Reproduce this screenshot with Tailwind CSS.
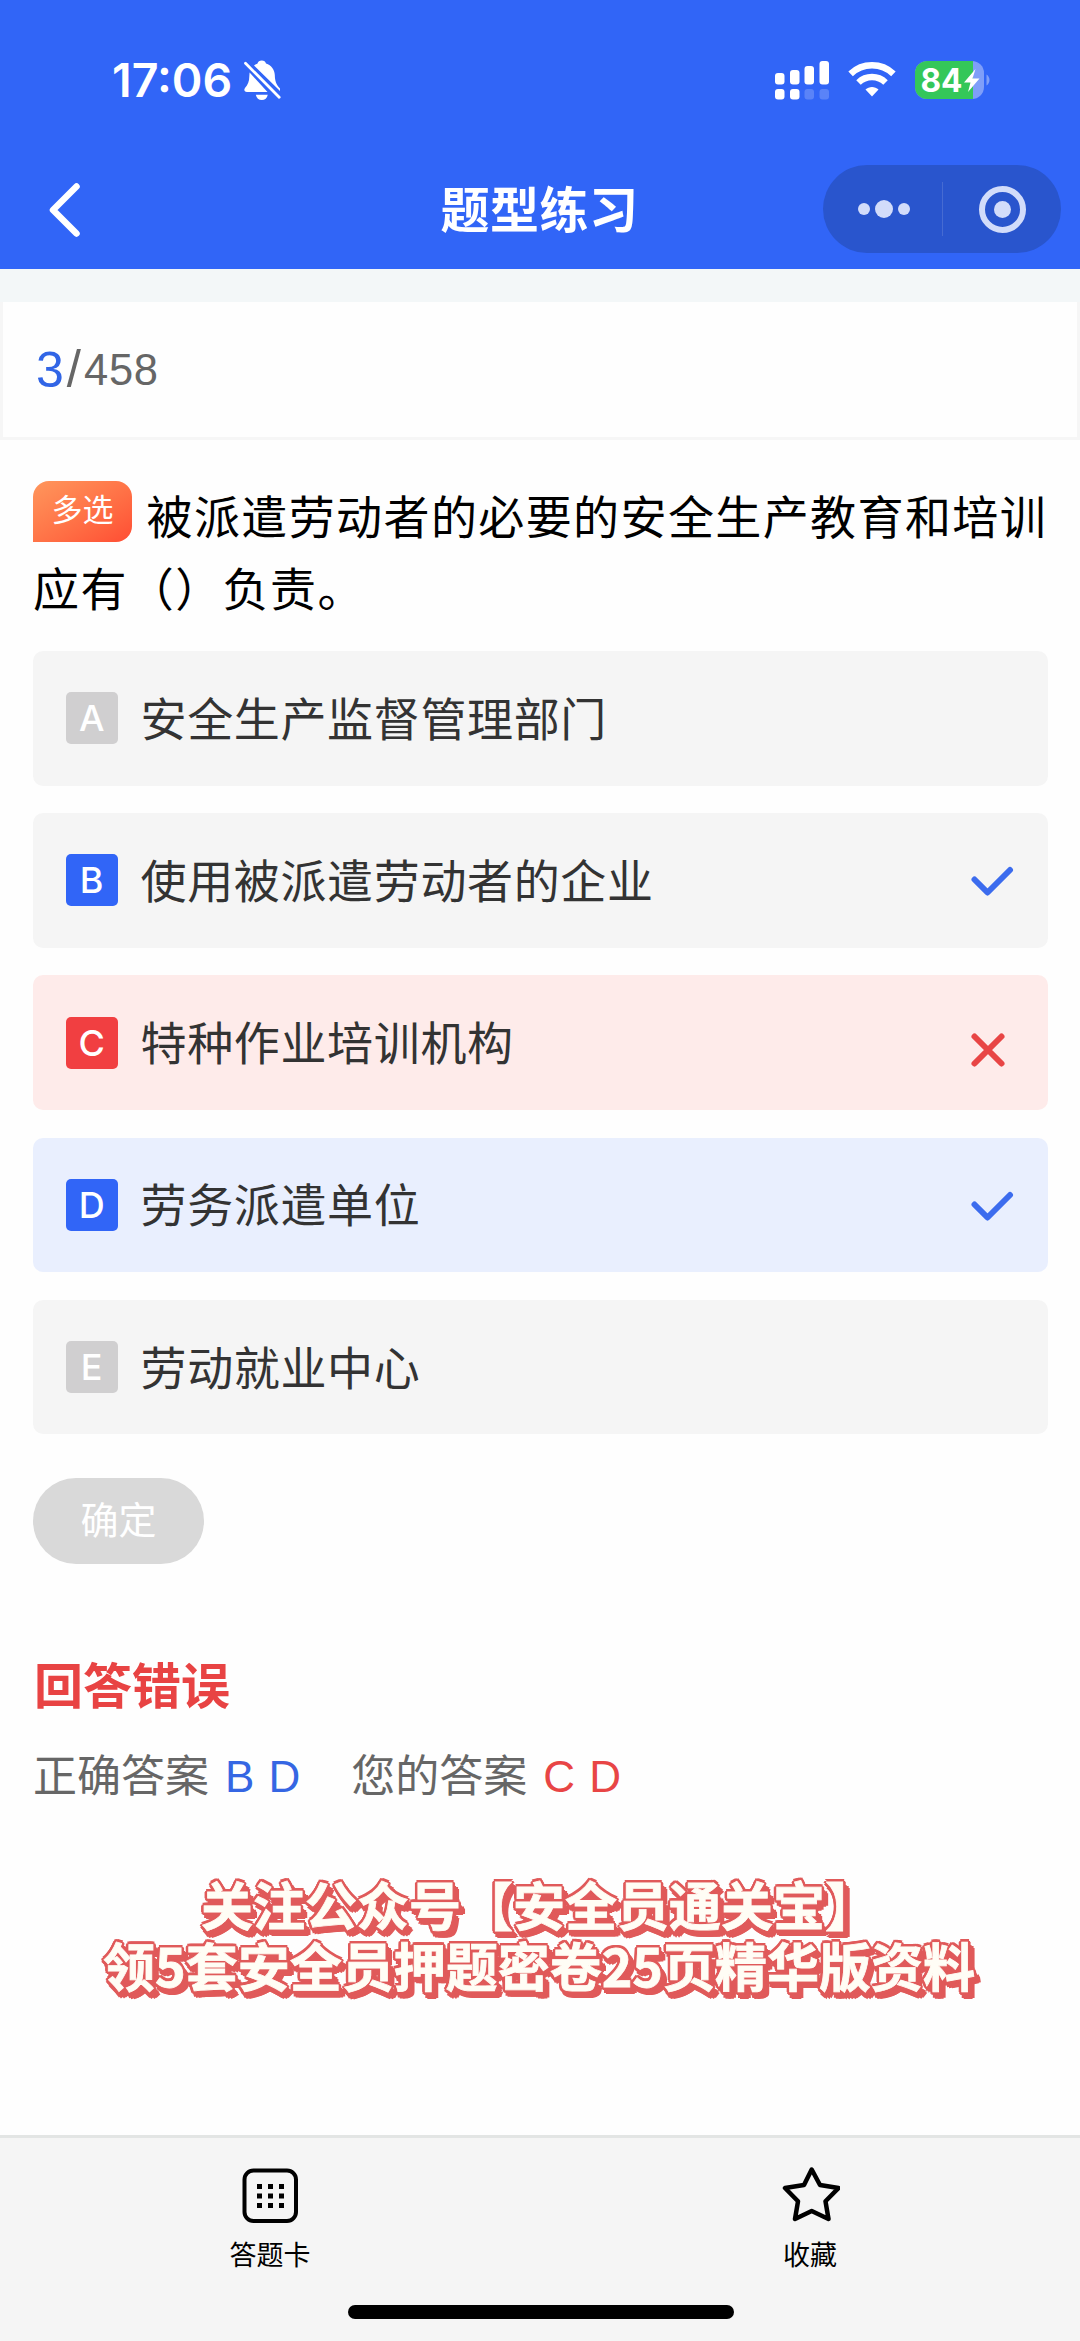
<!DOCTYPE html>
<html lang="zh-CN">
<head>
<meta charset="utf-8">
<title>题型练习</title>
<script src="https://cdn.jsdelivr.net/npm/@tailwindcss/browser@4"></script>
</head>
<body class="bg-[#fefefe]">
<div class="flex h-[2341px] w-[1080px] flex-col overflow-hidden font-['Liberation_Sans','Noto_Sans_CJK_SC',sans-serif] text-[#333]">

  <header class="h-[269px] shrink-0 bg-[#3165f7] text-white">
    <div class="flex h-[160px] items-center pr-[89px] pl-[112px]">
      <span class="w-[121px] pt-px font-['Inter',sans-serif] text-[46.500px] leading-none font-semibold">17:06</span>
      <svg class="ml-[10px] h-[40px] w-[40px]" viewBox="0 0 40 40" fill="#fff">
        <path d="M11 5.500C12.500 4.500 13.500 4 14.500 3.500C15 1.500 16.500 .5 18.800 .5C21 .5 22.500 1.500 23 3.500C28.500 5.500 31.500 9.500 31.800 15C32 21 33 24.500 37 28.500V31L11 5.500Z"/>
        <path d="M6.600 12.500L24.500 32H4C1 32 .8 29.500 2 28C5 24.500 6.200 21.500 6.300 16.500Z"/>
        <path d="M12.800 34.700H24.800C24 38 22 40 18.800 40S13.600 38 12.800 34.700Z"/>
        <path d="M2.500 3.300L36.200 37.200" stroke="#fff" stroke-width="2.800" stroke-linecap="round"/>
      </svg>
      <div class="ml-auto flex items-center">
        <svg class="h-[40px] w-[56px]" viewBox="0 0 56 40" fill="#fff">
          <rect x="1" y="13" width="9.500" height="11.500" rx="3"/><rect x="16" y="10" width="9.500" height="14.500" rx="3"/><rect x="30.500" y="6" width="9.500" height="18.500" rx="3"/><rect x="45.500" y="1" width="9.500" height="23.500" rx="3"/>
          <rect x="1" y="29" width="9.500" height="10.500" rx="3"/><rect x="16" y="29" width="9.500" height="10.500" rx="3"/><rect x="30.500" y="29" width="9.500" height="10.500" rx="3" opacity=".2"/><rect x="45.500" y="29" width="9.500" height="10.500" rx="3" opacity=".2"/>
        </svg>
        <svg class="ml-[18px] h-[40px] w-[48px]" viewBox="0 0 48 40" fill="none" stroke="#fff" stroke-width="6.500">
          <path d="M2.600 13.800A31 31 0 0 1 45.400 13.800"/><path d="M10.500 22.500A19.500 19.500 0 0 1 37.500 22.500"/>
          <path d="M17.500 29.500C21 26 27 26 30.500 29.500L24 36.500Z" fill="#fff" stroke="none"/>
        </svg>
        <svg class="ml-[19px] h-[40px] w-[76px]" viewBox="0 0 76 40">
          <clipPath id="cell"><rect x="0" y="1" width="69" height="38" rx="12"/></clipPath>
          <g clip-path="url(#cell)"><rect width="76" height="40" fill="#7f9ef9"/><rect width="58" height="40" fill="#34c759"/></g>
          <path d="M71.500 14.500C75.500 17 75.500 23 71.500 25.500Z" fill="#7f9ef9"/>
          <text x="5.500" y="31.500" font-family="Inter" font-weight="700" font-size="32" textLength="42" lengthAdjust="spacingAndGlyphs" fill="#fff">84</text>
          <path d="M60.500 9L49 22.500H55.500L53 32L64.500 18.500H57.500Z" fill="#fff"/>
        </svg>
      </div>
    </div>
    <div class="flex h-[98px] items-center justify-between pr-[19px] pl-[48px]">
      <svg class="h-[56px] w-[208px]" viewBox="0 0 208 56" fill="none" stroke="#fff" stroke-width="6.500" stroke-linecap="round" stroke-linejoin="round"><path d="M28.500 5.500L5 29L28.500 52.500"/></svg>
      <h1 class="pt-[4px] text-[49px] leading-none font-bold tracking-[0.5px]">题型练习</h1>
      <div class="flex h-[88px] w-[238px] items-center rounded-full bg-[#2955cd]">
        <div class="flex flex-1 items-center justify-center gap-[5px] pl-[2px]">
          <i class="size-[12px] rounded-full bg-[#d2dcfa]"></i><i class="size-[18px] rounded-full bg-[#d2dcfa]"></i><i class="size-[12px] rounded-full bg-[#d2dcfa]"></i>
        </div>
        <div class="h-[54px] w-px bg-[#466bd2]"></div>
        <div class="flex flex-1 justify-center">
          <div class="flex size-[47px] items-center justify-center rounded-full border-[6px] border-[#d2dcfa]"><i class="size-[17px] rounded-full bg-[#d2dcfa]"></i></div>
        </div>
      </div>
    </div>
  </header>

  <div class="h-[33px] shrink-0 bg-[#f3f7f8]"></div>
  <div class="flex h-[138px] shrink-0 items-center border-x-[3px] border-b-[3px] border-[#f6f6f6] pl-[33px] text-[43.500px] leading-[56px] text-[#666]">
    <span class="text-[50px] text-[#3165e6]">3</span><span class="pl-[3px] text-[51px]">/</span><span class="pl-[3px] tracking-[0.7px]">458</span>
  </div>

  <main class="flex flex-1 flex-col pr-[32px] pl-[33px]">
    <p class="mt-[41px] h-[170px] text-[46px] leading-[72px] tracking-[1.400px] whitespace-nowrap text-black"><span class="mr-[14.500px] inline-flex h-[61px] w-[99px] items-center justify-center rounded-[16px] rounded-bl-none bg-linear-to-br from-[#ff965c] to-[#ff4c33] pb-[3px] align-[13px] text-[31px] leading-none tracking-normal text-white">多选</span>被派遣劳动者的必要的安全生产教育和培训<br>应有（）负责。</p>

    <ul class="flex flex-col gap-[27.700px] text-[46px] leading-none tracking-[0.650px]">
      <li class="flex h-[134.500px] items-center rounded-[10px] bg-[#f5f5f5] pl-[33px]">
        <b class="mr-[22.500px] flex size-[52px] items-center justify-center rounded-[5px] bg-[#d0cfd0] font-['Inter',sans-serif] text-[36px] font-medium text-white">A</b><span class="pt-[3px]">安全生产监督管理部门</span>
      </li>
      <li class="flex h-[134.500px] items-center rounded-[10px] bg-[#f5f5f5] pl-[33px]">
        <b class="mr-[22.500px] flex size-[52px] items-center justify-center rounded-[5px] bg-[#3165f7] font-['Inter',sans-serif] text-[36px] font-medium text-white">B</b><span class="pt-[3px]">使用被派遣劳动者的企业</span>
        <svg class="mr-[34px] ml-auto h-[36px] w-[44px]" viewBox="0 0 44 36" fill="none" stroke="#3c6cee" stroke-width="6" stroke-linecap="round" stroke-linejoin="round"><path d="M4.500 17.500L17.500 30.500L40 8"/></svg>
      </li>
      <li class="flex h-[134.500px] items-center rounded-[10px] bg-[#feebea] pl-[33px]">
        <b class="mr-[22.500px] flex size-[52px] items-center justify-center rounded-[5px] bg-[#f13f41] font-['Inter',sans-serif] text-[36px] font-medium text-white">C</b><span class="pt-[3px]">特种作业培训机构</span>
        <svg class="mt-[14px] mr-[42px] ml-auto size-[36px]" viewBox="0 0 36 36" fill="none" stroke="#e84545" stroke-width="6" stroke-linecap="round"><path d="M4.500 4.500L31.500 31.500M31.500 4.500L4.500 31.500"/></svg>
      </li>
      <li class="flex h-[134.500px] items-center rounded-[10px] bg-[#e9effe] pl-[33px]">
        <b class="mr-[22.500px] flex size-[52px] items-center justify-center rounded-[5px] bg-[#3165f7] font-['Inter',sans-serif] text-[36px] font-medium text-white">D</b><span class="pt-[3px]">劳务派遣单位</span>
        <svg class="mr-[34px] ml-auto h-[36px] w-[44px]" viewBox="0 0 44 36" fill="none" stroke="#3c6cee" stroke-width="6" stroke-linecap="round" stroke-linejoin="round"><path d="M4.500 17.500L17.500 30.500L40 8"/></svg>
      </li>
      <li class="flex h-[134.500px] items-center rounded-[10px] bg-[#f5f5f5] pl-[33px]">
        <b class="mr-[22.500px] flex size-[52px] items-center justify-center rounded-[5px] bg-[#d0cfd0] font-['Inter',sans-serif] text-[36px] font-medium text-white">E</b><span class="pt-[3px]">劳动就业中心</span>
      </li>
    </ul>

    <button class="mt-[44px] h-[86px] w-[171px] rounded-full bg-[#d9d9d9] pb-px text-[38px] leading-none text-white">确定</button>

    <h2 class="mt-[98px] pl-px text-[49px] leading-[50px] font-bold text-[#e84343]">回答错误</h2>
    <div class="mt-[35px] flex text-[44px] leading-[60px] text-[#666]">
      <span>正确答案</span><span class="ml-[16px] text-[#3566e3] [word-spacing:2px]">B D</span>
      <span class="ml-[51px]">您的答案</span><span class="ml-[16px] text-[#e84545] [word-spacing:2px]">C D</span>
    </div>

    <div class="mt-[66px] -ml-[3px] text-center font-['Noto_Sans_CJK_SC',sans-serif] text-[52px] leading-[61px] font-bold whitespace-nowrap text-[#fffdf5] [-webkit-text-stroke:0.8px_#fffdf5] [text-shadow:3px_0_#e05a5a,2.600px_1.500px_#e05a5a,1.500px_2.600px_#e05a5a,0_3px_#e05a5a,-1.500px_2.600px_#e05a5a,-2.600px_1.500px_#e05a5a,-3px_0_#e05a5a,-2.600px_-1.500px_#e05a5a,-1.500px_-2.600px_#e05a5a,0_-3px_#e05a5a,1.500px_-2.600px_#e05a5a,2.600px_-1.500px_#e05a5a,4px_3px_#e05a5a,3px_5px_#e05a5a,5px_5px_#e05a5a,6px_4px_#e05a5a,5px_7px_#e05a5a,2px_7px_#e05a5a,7px_6px_#e05a5a,0px_6px_#e05a5a]">
      <p>关注公众号【安全员通关宝】</p>
      <p>领5套安全员押题密卷25页精华版资料</p>
    </div>
  </main>

  <footer class="flex h-[206px] shrink-0 flex-col items-center border-t-[3px] border-[#e3e5e4] bg-[#f5f5f5] text-[27px] leading-[36px] text-black">
    <nav class="grid h-[167px] w-full grid-cols-2 pt-[27px]">
      <div class="flex flex-col items-center">
        <svg class="h-[60px] w-[60px]" viewBox="0 0 60 60"><rect x="4.500" y="5.500" width="51.500" height="50.500" rx="9" fill="none" stroke="#000" stroke-width="4"/><path d="M17 21.500h5m6 0h5m6 0h5M17 31h5m6 0h5m6 0h5M17 40.500h5m6 0h5m6 0h5" stroke="#000" stroke-width="5"/></svg>
        <span class="mt-[13px]">答题卡</span>
      </div>
      <div class="flex flex-col items-center">
        <svg class="h-[60px] w-[60px]" viewBox="0 0 60 60" fill="none" stroke="#000" stroke-width="4.500" stroke-linejoin="round"><path d="M31.700 4.500L40 20L58.500 23L45.500 36.300L48.500 54L31.700 46L15 54L18 36.300L5 23L24 20Z"/></svg>
        <span class="mt-[13px]">收藏</span>
      </div>
    </nav>
    <div class="ml-[2px] h-[14px] w-[386px] rounded-full bg-black"></div>
  </footer>
</div>
</body>
</html>
